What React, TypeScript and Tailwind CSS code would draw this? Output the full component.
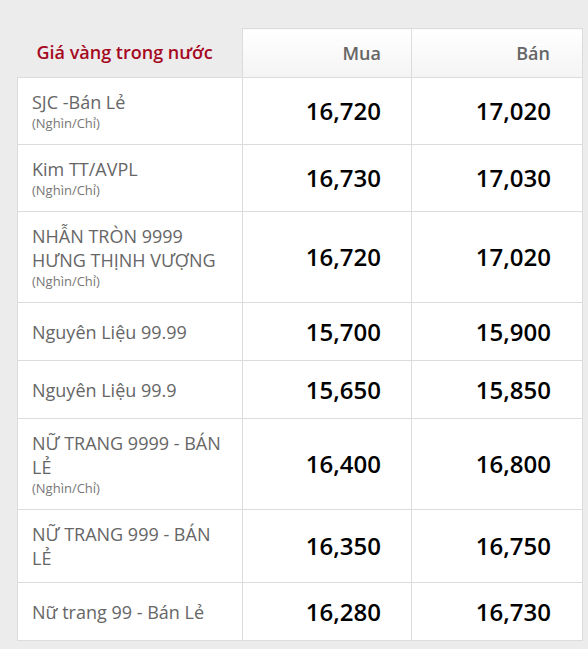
const rows = [
  { name: 'SJC -Bán Lẻ', unit: true, buy: '16,720', sell: '17,020' },
  { name: 'Kim TT/AVPL', unit: true, buy: '16,730', sell: '17,030' },
  { name: 'NHẪN TRÒN 9999 HƯNG THỊNH VƯỢNG', unit: true, buy: '16,720', sell: '17,020' },
  { name: 'Nguyên Liệu 99.99', unit: false, buy: '15,700', sell: '15,900' },
  { name: 'Nguyên Liệu 99.9', unit: false, buy: '15,650', sell: '15,850' },
  { name: 'NỮ TRANG 9999 - BÁN LẺ', unit: true, buy: '16,400', sell: '16,800' },
  { name: 'NỮ TRANG 999 - BÁN LẺ', unit: false, buy: '16,350', sell: '16,750' },
  { name: 'Nữ trang 99 - Bán Lẻ', unit: false, buy: '16,280', sell: '16,730' },
];

const App = () => {
  return (
    <div className="min-h-[649px] bg-[#ececec] pt-[28px] pl-[17px] pr-[6px] font-['Open_Sans',sans-serif]">
      <table className="w-[565px] border-collapse table-fixed">
        <colgroup>
          <col className="w-[225px]" />
          <col className="w-[169px]" />
          <col className="w-[171px]" />
        </colgroup>
        <thead>
          <tr className="h-[49px]">
            <th className="pl-[19px] text-left text-[18px] font-semibold text-[#a6091f]">Giá vàng trong nước</th>
            <th className="border border-[#dcdcdc] bg-gradient-to-b from-white to-[#f4f4f4] pr-[30px] text-right text-[18px] font-semibold text-[#666]">Mua</th>
            <th className="border border-[#dcdcdc] bg-gradient-to-b from-white to-[#f4f4f4] pr-[32px] text-right text-[18px] font-semibold text-[#666]">Bán</th>
          </tr>
        </thead>
        <tbody>
          {rows.map((r) => (
            <tr key={r.name} className="bg-white">
              <td className="h-[58px] border border-[#dcdcdc] pl-[14px] pr-[16px] py-[12px] align-middle">
                <div className="text-[18px] leading-[24px] text-[#666]">{r.name}</div>
                {r.unit && <div className="text-[13px] leading-[18px] text-[#777]">(Nghìn/Chỉ)</div>}
              </td>
              <td className="border border-[#dcdcdc] pr-[30px] text-right align-middle text-[24px] font-semibold text-black">{r.buy}</td>
              <td className="border border-[#dcdcdc] pr-[31px] text-right align-middle text-[24px] font-semibold text-black">{r.sell}</td>
            </tr>
          ))}
        </tbody>
      </table>
    </div>
  );
};

export default App;
